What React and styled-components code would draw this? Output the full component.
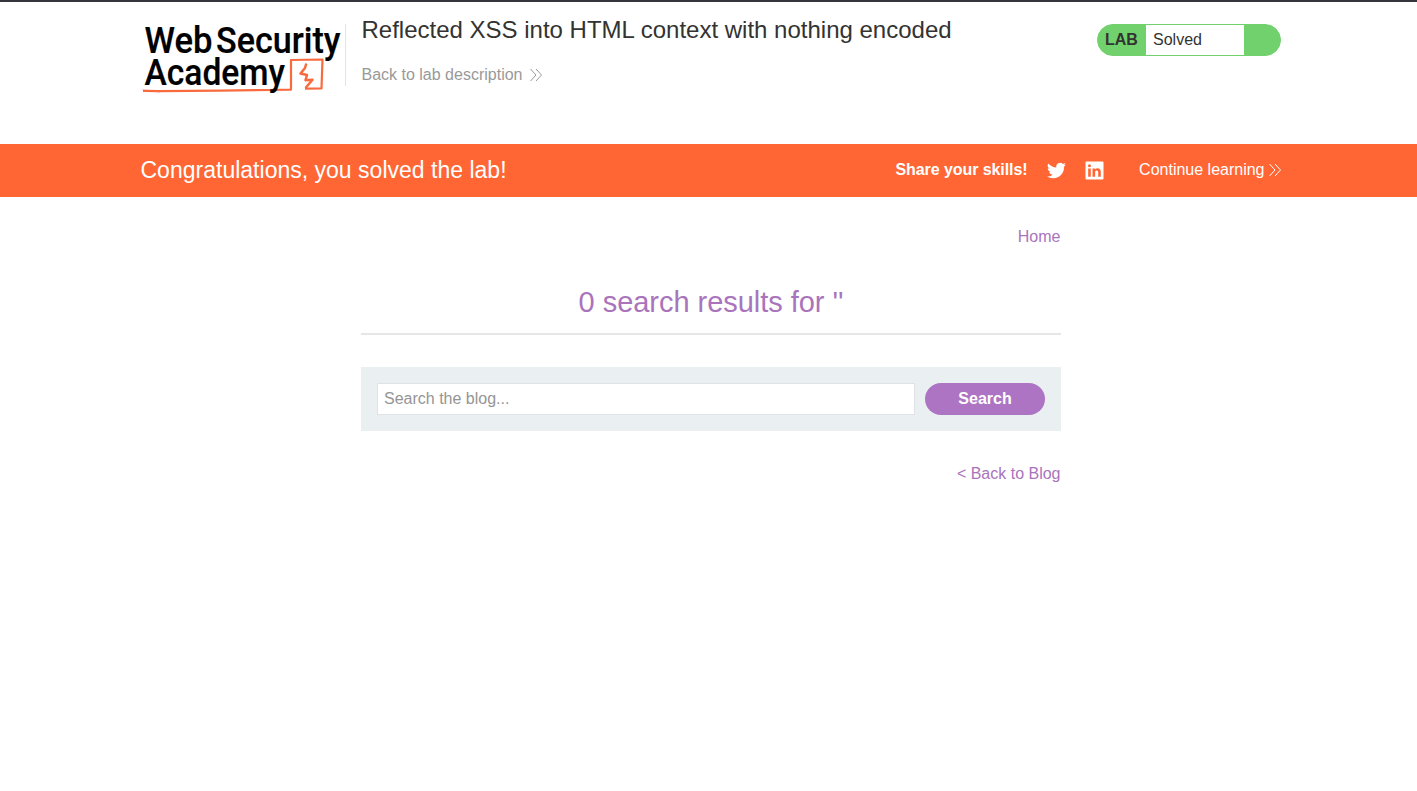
import React from "react";
import styled, { createGlobalStyle } from "styled-components";

const GlobalStyle = createGlobalStyle`
  *, *::before, *::after { box-sizing: border-box; }
  html, body { margin: 0; padding: 0; background: #fff; }
  body {
    font-family: "Liberation Sans", Arial, sans-serif;
    font-size: 16px;
    line-height: 20px;
    color: #333332;
    overflow: hidden;
  }
`;

const Page = styled.div`
  min-height: 791px;
  border-top: 2px solid #35343a;
`;

const Container = styled.div`
  width: 1140px;
  margin-left: 141px;
  display: flex;
  align-items: ${(p) => p.$align || "center"};
`;

const BannerContainer = styled(Container)`
  margin-left: 140.5px;
`;

const Header = styled.header`
  height: 142px;
  padding-top: 22px;
`;

const LogoSvg = styled.svg`
  display: block;
  flex: none;
  width: 204px;
  height: 72px;
  overflow: visible;
`;

const TitleBlock = styled.div`
  flex: 1;
  height: 62px;
  padding-left: 15.5px;
  border-left: 1px solid #e4e4e4;
`;

const Title = styled.h2`
  margin: -8px 0 0;
  font-size: 24px;
  line-height: 28px;
  font-weight: 400;
  white-space: nowrap;
`;

const BackLink = styled.a`
  display: flex;
  align-items: center;
  gap: 8px;
  margin-top: 21px;
  color: #999;
`;

const Status = styled.div`
  display: flex;
  width: 184px;
  height: 32px;
  border: 1px solid #71d16d;
  border-radius: 16px;
  background: #71d16d;
  line-height: 30px;
`;

const StatusLabel = styled.span`
  width: 48px;
  padding-left: 7px;
  font-weight: 700;
`;

const StatusText = styled.span`
  width: 98px;
  padding-left: 7px;
  background: #fff;
`;

const Banner = styled.section`
  height: 53px;
  padding-bottom: 2px;
  display: flex;
  align-items: center;
  background: #ff6633;
  color: #fff;
`;

const BannerTitle = styled.h4`
  flex: 1;
  margin: 0;
  font-size: 23px;
  line-height: 28px;
  font-weight: 400;
  letter-spacing: 0.01px;
`;

const Share = styled.div`
  display: flex;
  align-items: center;
  font-weight: 700;
`;

const SocialIcon = styled.svg`
  display: block;
  width: 19px;
  height: 19px;
  margin: 1px 0 0 ${(p) => p.$gap}px;
  fill: #fff;
`;

const ContinueLink = styled.a`
  display: flex;
  align-items: center;
  gap: 4px;
  margin-left: 35px;
`;

const ChevronSvg = styled.svg`
  display: block;
  width: 12px;
  height: 14px;
  fill: none;
  stroke: currentColor;
  stroke-width: 1;
`;

const Blog = styled.main`
  width: 700px;
  margin: 30px 0 0 361px;
`;

const NavRow = styled.nav`
  display: flex;
  justify-content: flex-end;
  padding-right: 0.5px;
  color: #a974bc;
`;

const ResultsHeading = styled.h1`
  margin: 36px 0 32px;
  height: 52px;
  border-bottom: 2px solid #e4e6e7;
  font-size: 29px;
  line-height: 38px;
  font-weight: 400;
  letter-spacing: -0.04px;
  text-align: center;
  color: #a974bc;
`;

const SearchForm = styled.form`
  display: flex;
  gap: 10px;
  height: 64px;
  padding: 16px;
  margin-bottom: 33px;
  background: #eaeff2;
`;

const SearchInput = styled.input`
  flex: 1;
  min-width: 0;
  height: 32px;
  padding: 0 6px;
  border: 1px solid #e0e3e5;
  border-radius: 0;
  font: inherit;
  &::placeholder { color: #959595; opacity: 1; }
`;

const SearchButton = styled.button`
  width: 120px;
  height: 32px;
  padding: 0;
  border: 0;
  border-radius: 16px;
  background: #ad74c3;
  color: #fff;
  font: inherit;
  font-weight: 700;
`;

const ShareLabel = styled.span`
  letter-spacing: -0.07px;
`;

function DoubleChevron() {
  return (
    <ChevronSvg viewBox="0 0 12 14" aria-hidden="true">
      <path d="M0.500 1 6 7 0.500 13M6 1 11.500 7 6 13" />
    </ChevronSvg>
  );
}

function Logo() {
  return (
    <LogoSvg viewBox="141 24 204 72" role="img" aria-label="Web Security Academy">
      <g fill="none" stroke="#f76b3f" strokeWidth="2.200" strokeLinejoin="round">
        <path d="M143 90.800 160 91.200 220 90.700 270 90 291 89.600 291 60 322.500 59.500 321.500 88.500 305 88.700" />
        <path strokeWidth="2.500" d="M306.300 63.500 305 68 300.500 73.500 307 75 305.500 80.200 312.500 79.800 305.500 88" />
      </g>
      <path d="M141 89.800 160 90.300 160 92.200 150 91.800z" fill="#f76b3f" />
      <g fill="#000" stroke="#000" strokeWidth="0.200" fontFamily="Roboto, sans-serif" fontWeight="500" fontSize="37.500">
        <text x="144.500" y="52.500" textLength="68" lengthAdjust="spacingAndGlyphs">Web</text>
        <text x="216" y="52.500" textLength="124.500" lengthAdjust="spacingAndGlyphs">Security</text>
        <text x="144.500" y="85" textLength="140.500" lengthAdjust="spacingAndGlyphs">Academy</text>
      </g>
    </LogoSvg>
  );
}

export default function App() {
  return (
    <>
      <GlobalStyle />
      <Page>
        <Header>
          <Container $align="flex-start">
            <Logo />
            <TitleBlock>
              <Title>Reflected XSS into HTML context with nothing encoded</Title>
              <BackLink>
                Back to lab description
                <DoubleChevron />
              </BackLink>
            </TitleBlock>
            <Status>
              <StatusLabel>LAB</StatusLabel>
              <StatusText>Solved</StatusText>
            </Status>
          </Container>
        </Header>
        <Banner>
          <BannerContainer>
            <BannerTitle>Congratulations, you solved the lab!</BannerTitle>
            <Share>
              <ShareLabel>Share your skills!</ShareLabel>
              <SocialIcon $gap={19.5} viewBox="0 0 24 24" aria-hidden="true">
                <path d="M23.950 4.570a10 10 0 0 1-2.820.770 4.960 4.960 0 0 0 2.160-2.720c-.950.550-2 .950-3.120 1.180a4.920 4.920 0 0 0-8.390 4.490C7.690 8.090 4.070 6.130 1.640 3.160a4.920 4.920 0 0 0 1.520 6.570 4.900 4.900 0 0 1-2.230-.610v.060c0 2.380 1.700 4.370 3.950 4.830a5 5 0 0 1-2.210.080 4.940 4.940 0 0 0 4.600 3.420A9.870 9.870 0 0 1 0 19.540a14 14 0 0 0 7.550 2.210c9.050 0 14-7.500 14-13.980 0-.210 0-.420-.020-.630a9.940 9.940 0 0 0 2.420-2.570z" />
              </SocialIcon>
              <SocialIcon $gap={19} viewBox="0 0 19 19" aria-hidden="true">
                <path fillRule="evenodd" d="M1.500.500h16a1 1 0 0 1 1 1v16a1 1 0 0 1-1 1h-16a1 1 0 0 1-1-1v-16a1 1 0 0 1 1-1zM3.200 7.400v8.300h2.600V7.400zM4.500 3.200a1.500 1.500 0 1 0 0 3 1.500 1.500 0 0 0 0-3zM7.500 7.400v8.300h2.600v-4.200c0-1.200.500-2 1.600-2s1.500.8 1.500 2v4.200h2.600v-4.700c0-2.500-1.200-3.800-3.100-3.800-1.300 0-2.100.6-2.600 1.400V7.400z" />
              </SocialIcon>
            </Share>
            <ContinueLink>
              Continue learning
              <DoubleChevron />
            </ContinueLink>
          </BannerContainer>
        </Banner>
        <Blog>
          <NavRow>Home</NavRow>
          <ResultsHeading>0 search results for ''</ResultsHeading>
          <SearchForm onSubmit={(e) => e.preventDefault()}>
            <SearchInput type="text" placeholder="Search the blog..." />
            <SearchButton type="submit">Search</SearchButton>
          </SearchForm>
          <NavRow>&lt; Back to Blog</NavRow>
        </Blog>
      </Page>
    </>
  );
}
